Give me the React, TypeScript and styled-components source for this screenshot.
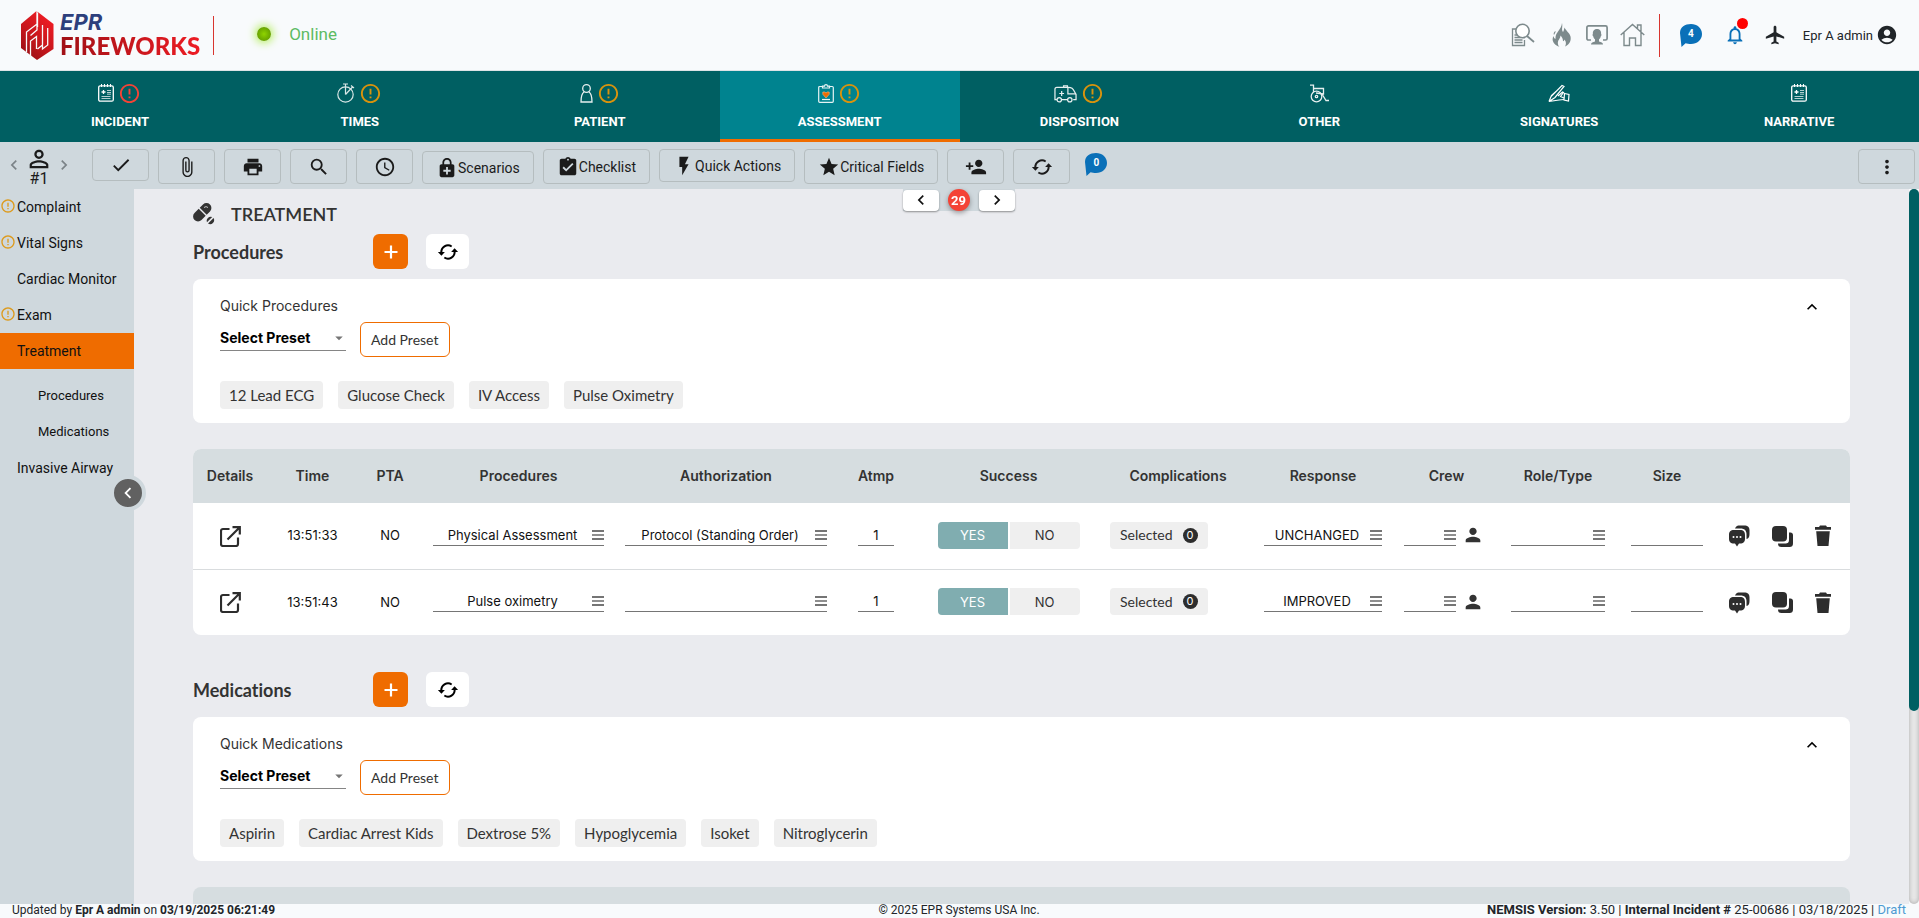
import React from "react";
import styled, { createGlobalStyle, css } from "styled-components";
import {
  MdErrorOutline, MdAttachFile, MdPrint, MdSearch, MdSchedule, MdEnhancedEncryption, MdAssignmentTurnedIn,
  MdFlashOn, MdStar, MdPersonAdd, MdPersonOutline, MdCheck, MdMoreVert, MdNotificationsNone,
  MdLocalAirport, MdAccountCircle, MdPerson, MdKeyboardArrowUp, MdChevronLeft, MdChevronRight,
  MdArrowDropDown,
} from "react-icons/md";

const GlobalStyle = createGlobalStyle`
  *, *::before, *::after { box-sizing: border-box; }
  body { margin: 0; font-family: Roboto, "Liberation Sans", sans-serif; color: #212529; background: #f8fafc; font-variant-ligatures: none; }
  button, input, select { font: inherit; color: inherit; margin: 0; padding: 0; border: 0; background: none; }
  button { cursor: pointer; }
  svg { display: block; flex: none; }
  a { color: inherit; text-decoration: none; }
`;

const inter = `Inter, "Liberation Sans", sans-serif`;
const lato = `Lato, "Liberation Sans", sans-serif`;

/* ---------- shell ---------- */
const Shell = styled.div`
  display: grid;
  grid-template-rows: auto auto auto 1fr auto;
  grid-template-columns: 100%;
  height: 100vh;
`;

/* ---------- header ---------- */
const Header = styled.header`
  display: flex;
  align-items: center;
  height: 71px;
  padding: 0 21px;
  background: #f8fafc;
  border-bottom: 1px solid #dde3e6;
`;
const Brand = styled.a`
  display: flex;
  align-items: center;
  gap: 6px;
`;
const BrandText = styled.span`
  display: flex;
  flex-direction: column;
  margin-right: 7px;
`;
const BrandTop = styled.span`
  font: italic 700 22px/22px ${inter};
  color: #2d3f7c;
`;
const BrandName = styled.span`
  font: 900 24px/26px ${lato};
  color: transparent;
  background: linear-gradient(90deg, #a01016, #ed1c24);
  background-clip: text;
`;
const Rule = styled.span<{ $h: number }>`
  width: 1px;
  height: ${(p) => p.$h}px;
  background: #d8352f;
`;
const Status = styled.div`
  display: flex;
  align-items: center;
  gap: 18px;
  margin-left: 43px;
  padding-bottom: 3px;
  font-size: 17px;
  color: #5dbb63;
`;
const Led = styled.span`
  width: 14px;
  height: 14px;
  border-radius: 50%;
  background: radial-gradient(circle, #8fd400 0%, #72b000 50%, #5c9100 100%);
  box-shadow: 0 0 9px 2px #b5ee5f;
`;
const HeaderTools = styled.div`
  display: flex;
  align-items: center;
  margin-left: auto;
`;
const IconButton = styled.button<{ $gap?: number }>`
  display: flex;
  align-items: center;
  position: relative;
  margin-right: ${(p) => p.$gap ?? 0}px;
`;
const RedDot = styled.span`
  position: absolute;
  top: -6px;
  right: -2px;
  width: 11px;
  height: 11px;
  border-radius: 50%;
  background: #ff0000;
`;
const User = styled.button`
  display: flex;
  align-items: center;
  gap: 3px;
  font-size: 13px;
`;
const BubbleButton = styled.button<{ $top?: number; $left?: number; $right?: number }>`
  display: flex;
  align-items: center;
  justify-content: center;
  position: relative;
  margin: ${(p) => p.$top ?? 0}px ${(p) => p.$right ?? 0}px 0 ${(p) => p.$left ?? 0}px;
`;
const BubbleCount = styled.span`
  position: absolute;
  inset: 0 0 4px;
  display: flex;
  align-items: center;
  justify-content: center;
  font-size: 10px;
  font-weight: 700;
  color: #fff;
`;

/* ---------- tabs ---------- */
const Tabs = styled.nav`
  display: grid;
  grid-template-columns: repeat(8, 1fr);
  background: #005f62;
`;
const Tab = styled.a<{ $active?: boolean }>`
  display: flex;
  flex-direction: column;
  align-items: center;
  gap: 9px;
  height: 71px;
  padding-top: 10px;
  color: #fff;
  font-size: 13px;
  font-weight: 700;
  line-height: 16px;
  ${(p) => p.$active && css`background: #00838f; border-bottom: 3px solid #ef6c00;`}
`;
const TabIcons = styled.span`
  display: flex;
  align-items: center;
  gap: 4px;
  height: 24px;
`;

/* ---------- toolbar ---------- */
const Toolbar = styled.div`
  display: flex;
  align-items: flex-start;
  height: 47px;
  padding: 7px 4px 0 0;
  background: #cfd8dd;
`;
const PatientNav = styled.div`
  display: flex;
  align-items: center;
  justify-content: space-between;
  width: 78px;
  margin: -4px 14px 0 0;
  padding: 0 4px;
  color: #7b8387;
`;
const Patient = styled.button`
  display: flex;
  flex-direction: column;
  align-items: center;
  color: #1b1b1b;
  font-size: 16px;
  line-height: 12px;
`;
const ToolButtons = styled.div`
  display: flex;
  gap: 9px;
`;
const ToolButton = styled.button<{ $h?: number; $end?: boolean }>`
  display: flex;
  align-items: center;
  justify-content: center;
  align-self: ${(p) => (p.$end ? "flex-end" : "flex-start")};
  min-width: 57px;
  height: ${(p) => p.$h ?? 35}px;
  padding: 0 13px;
  border: 1px solid #b5bdbf;
  border-radius: 4px;
  color: #1b1b1b;
  font-size: 14px;
`;

/* ---------- body ---------- */
const Body = styled.div`
  display: grid;
  grid-template-columns: 134px minmax(0, 1fr) 10px;
  min-height: 0;
  position: relative;
`;
const Sidebar = styled.nav`
  display: flex;
  flex-direction: column;
  background: #cfd8dd;
  position: relative;
`;
const SideItem = styled.a<{ $active?: boolean }>`
  display: flex;
  align-items: center;
  height: 36px;
  font-size: 14px;
  color: #111;
  background: ${(p) => (p.$active ? "#ef6c00" : "none")};
`;
const SideAlert = styled.span`
  display: flex;
  width: 17px;
  height: 18px;
  color: #dd9a1c;
`;
const SideGroup = styled.div`
  padding: 8px 0 1px;
`;
const SideSub = styled(SideItem)`
  padding-left: 38px;
  font-size: 13px;
`;
const Collapse = styled.button`
  position: absolute;
  top: 286px;
  right: -12px;
  z-index: 2;
  display: flex;
  align-items: center;
  justify-content: center;
  width: 36px;
  height: 36px;
  border: 4px solid #cfd8dd;
  border-radius: 50%;
  background: #616161;
  color: #fff;
`;
const Content = styled.main`
  overflow-y: auto;
  scrollbar-width: none;
  padding: 10px 59px 0;
  background: #eaebef;
  color: #333;
`;
const Pager = styled.div`
  position: absolute;
  top: 0;
  left: 50%;
  margin-left: -57px;
  z-index: 2;
  display: flex;
  align-items: center;
  justify-content: space-between;
  width: 112px;
  height: 22px;
  background: #cfd8dd;
`;
const PagerButton = styled.button`
  display: flex;
  align-items: center;
  justify-content: center;
  width: 36px;
  height: 21px;
  border-radius: 4px;
  background: #fff;
  color: #111;
  box-shadow: 0 1px 2px rgba(0, 0, 0, 0.4);
`;
const PagerCount = styled.span`
  display: flex;
  align-items: center;
  justify-content: center;
  width: 22px;
  height: 22px;
  border-radius: 50%;
  background: #f44336;
  color: #fff;
  font-size: 13px;
  font-weight: 700;
  box-shadow: 0 2px 5px rgba(0, 0, 0, 0.35);
`;
const PageTitle = styled.h1`
  display: flex;
  align-items: center;
  gap: 16px;
  height: 30px;
  margin: 0 0 5px;
  font-family: ${lato};
  font-size: 18px;
  font-weight: 600;
`;
const Section = styled.section`
  margin-bottom: 37px;
`;
const SectionHead = styled.div`
  display: grid;
  grid-template-columns: 180px auto;
  justify-content: start;
  align-items: center;
  margin-bottom: 10px;
`;
const SectionTitle = styled.h2`
  margin: 0;
  font-family: ${lato};
  font-size: 18px;
  font-weight: 700;
`;
const AddButton = styled.button`
  display: flex;
  align-items: center;
  justify-content: center;
  height: 35px;
  border-radius: 6px;
  background: #ef6c00;
  color: #fff;
`;
const RefreshButton = styled(AddButton)`
  background: #fff;
  color: #000;
`;
const HeadButtons = styled.div`
  display: grid;
  grid-template-columns: 35px 43px;
  gap: 18px;
`;
const QuickCard = styled.div`
  display: flex;
  justify-content: space-between;
  align-items: flex-start;
  height: 144px;
  margin-bottom: 26px;
  padding: 17px 28px 0 27px;
  border-radius: 8px;
  background: #fff;
`;
const QuickBody = styled.div`
  display: flex;
  flex-direction: column;
`;
const QuickLabel = styled.h3`
  margin: 0 0 6px;
  font: 400 14px/20px ${inter};
`;
const PresetRow = styled.div`
  display: flex;
  align-items: flex-start;
  gap: 14px;
  margin-bottom: 24px;
`;
const SelectWrap = styled.span`
  display: flex;
  align-items: center;
  position: relative;
  width: 126px;
  padding-top: 4px;
  border-bottom: 1px solid #858585;
  color: #757575;
`;
const PresetSelect = styled.select`
  appearance: none;
  width: 100%;
  height: 24px;
  font: 700 14px/20px ${inter};
  color: #000;
`;
const Caret = styled.span`
  position: absolute;
  right: -2px;
  pointer-events: none;
`;
const AddPreset = styled.button`
  height: 35px;
  padding: 0 10px;
  border: 1px solid #ef6c00;
  border-radius: 6px;
  background: #fff;
  color: #333;
  font: 400 14px/20px ${lato};
`;
const Chips = styled.div`
  display: flex;
  flex-wrap: wrap;
  gap: 15px;
`;
const Chip = styled.button`
  height: 28px;
  padding: 0 9px;
  border-radius: 4px;
  background: #efefef;
  color: #333;
  font: 400 15px/20px ${lato};
`;
const CardToggle = styled.button`
  padding-top: 1px;
  color: #000;
`;

/* ---------- table ---------- */
const Grid = styled.table`
  width: 100%;
  table-layout: fixed;
  border-collapse: separate;
  border-spacing: 0;
  border-radius: 8px;
  overflow: hidden;
  background: #fff;
  font: 400 13px/20px ${inter};
  text-align: center;
  color: #111;
`;
const HeadCell = styled.th<{ $w: number }>`
  width: ${(p) => p.$w}px;
  height: 54px;
  padding: 0;
  background: #d6dde0;
  color: #333;
  font-size: 14px;
  font-weight: 600;
`;
const Cell = styled.td<{ $pad?: number; $end?: number }>`
  height: 66px;
  padding: 0 ${(p) => p.$end ?? p.$pad ?? 0}px 2px ${(p) => p.$pad ?? 0}px;
  tr + tr > & { border-top: 1px solid #d9dcde; }
`;
const Field = styled.span`
  display: flex;
  align-items: center;
  flex: 1;
  min-width: 0;
  border-bottom: 1px solid #757575;
`;
const FieldInput = styled.input`
  flex: 1;
  width: 100%;
  min-width: 0;
  height: 20px;
  text-align: center;
  outline: 0;
`;
const Line = styled.span<{ $gap?: number; $start?: boolean; $top?: number }>`
  display: flex;
  align-items: center;
  justify-content: ${(p) => (p.$start ? "flex-start" : "center")};
  gap: ${(p) => p.$gap ?? 0}px;
  padding-top: ${(p) => p.$top ?? 0}px;
  color: #333;
`;
const Toggle = styled.span`
  display: grid;
  grid-template-columns: 70px 70px;
  justify-content: center;
  gap: 2px;
`;
const ToggleButton = styled.button<{ $on?: boolean }>`
  height: 27px;
  border-radius: ${(p) => (p.$on ? "4px 0 0 4px" : "0 4px 4px 0")};
  background: ${(p) => (p.$on ? "#80adb0" : "#efefef")};
  color: ${(p) => (p.$on ? "#fff" : "#333")};
`;
const SelectedButton = styled.button`
  display: flex;
  align-items: center;
  gap: 10px;
  height: 27px;
  padding: 0 10px;
  border-radius: 4px;
  background: #efefef;
  color: #333;
  font: 400 14px/20px ${lato};
`;
const SelectedCount = styled.span`
  width: 15px;
  height: 15px;
  border-radius: 50%;
  background: #2d2d2d;
  color: #fff;
  font: 400 11px/15px ${inter};
`;
const NextTableHead = styled.div`
  height: 54px;
  border-radius: 8px 8px 0 0;
  background: #d6dde0;
`;

const Track = styled.div`
  border-radius: 5px;
  background: #e9e9e9;
  box-shadow: inset 0 0 5px #a9a9a9;
`;
const Thumb = styled.div`
  height: 73%;
  border-radius: 5px;
  background: #005f62;
`;

const Footer = styled.footer`
  display: grid;
  grid-template-columns: 1fr auto 1fr;
  height: 14px;
  padding: 0 13px 0 12px;
  background: #f8fafc;
  font-size: 12px;
  line-height: 12px;
  white-space: nowrap;
`;
const FooterEnd = styled.div`
  text-align: right;
  font-size: 13px;
`;
const DraftLink = styled.a`
  color: #4f9bd3;
`;

/* ---------- drawings ---------- */
const Logo = () => (
  <svg width="33" height="49" viewBox="0 0 33 49">
    <defs>
      <linearGradient id="shield" x1="0" y1="1" x2=".6" y2="0">
        <stop offset="0" stopColor="#8d0d12" />
        <stop offset="0.5" stopColor="#c4161c" />
        <stop offset="1" stopColor="#ed1c24" />
      </linearGradient>
    </defs>
    <path fill="url(#shield)" d="M15.500 0L0 13v24l16 12 16.500-11V13z" />
    <path
      fill="none"
      stroke="#f8fafc"
      strokeWidth="1.300"
      d="M16 0v13M5.500 41V21l10.500-8v6l-6.500 5.500M9.500 45V30l6-4.500V38M16.500 2v14M21.500 14v20l-5 4M26.700 17v17l-5.200 4v-5"
    />
  </svg>
);

const SyncIcon = () => (
  <svg width="22" height="22" viewBox="0 0 24 24">
    <path d="M4.800 13A7.300 7.300 0 0116 6M19.200 11A7.300 7.300 0 018 18" fill="none" stroke="currentColor" strokeWidth="2.200" />
    <path d="M1 12h7.600l-3.800 4zM23 12h-7.600l3.800-4z" fill="currentColor" />
  </svg>
);

const PlusIcon = () => (
  <svg width="14" height="14" viewBox="0 0 14 14">
    <path d="M7 .5v13M.5 7h13" stroke="currentColor" strokeWidth="2.200" />
  </svg>
);

const Bubble = () => (
  <svg width="22" height="23" viewBox="0 0 22 23">
    <path fill="#0a70b8" d="M0 9C0 3 5 0 11 0s11 4 11 10-5 10-11 10c-2 0-4-.3-5.400-.8L1.500 23z" />
  </svg>
);

const NotepadIcon = () => (
  <svg width="16" height="18" viewBox="0 0 16 18" fill="none" stroke="#fff">
    <rect x=".7" y="1.800" width="14.600" height="15.400" rx="1.500" strokeWidth="1.300" />
    <path d="M3.500 0v3M6.500 0v3M9.500 0v3M12.500 0v3" />
    <path d="M5.500 6v4M3.500 8h4" strokeWidth="1.300" />
    <path d="M9 6.500h4M9 8.500h4M9 10.200h4M3.500 12.500h9M3.500 14.500h9" opacity=".7" />
  </svg>
);
const StopwatchIcon = () => (
  <svg width="18" height="20" viewBox="0 0 18 20" fill="none" stroke="#d8e6e6" strokeWidth="1.200">
    <circle cx="8.500" cy="11.500" r="7.700" />
    <path d="M8.500 11.500V1M6 1h5M8.500 11.500L16 3.500M14 2.500l3 2.500" />
  </svg>
);
const BodyIcon = () => (
  <svg width="13" height="19" viewBox="0 0 13 19" fill="none" stroke="#e6efef" strokeWidth="1.300">
    <circle cx="6.500" cy="4.500" r="3.800" />
    <path d="M4 8C1.500 9.500 1 12 1 18h11c0-6-.5-8.500-3-10" />
  </svg>
);
const ClipboardIcon = () => (
  <svg width="16" height="19" viewBox="0 0 16 19" fill="none" stroke="#e6f3f4" strokeWidth="1.200">
    <rect x=".7" y="2.500" width="14.600" height="15.800" rx="1" />
    <path d="M4.500 4V2.200h2a1.500 1.500 0 013 0h2V4z" fill="#00838f" />
    <path d="M8 14L4.800 10.300V8h2l1.200 1 1.200-1h2v2.300z" fill="#ef6c00" stroke="#ffb27a" strokeWidth=".6" />
    <path d="M4 15.500h8" />
  </svg>
);
const AmbulanceIcon = () => (
  <svg width="23" height="19" viewBox="0 0 24 19" fill="none" stroke="#e6efef" strokeWidth="1.300">
    <path d="M3 16H1V5a2 2 0 012-2h12c3 0 5 1 6 4l2 3.500V16h-3M8 16h6" />
    <circle cx="5.500" cy="16" r="2.300" /><circle cx="16.500" cy="16" r="2.300" />
    <path d="M14.500 3v7H23M10 3V1.500h4V3M8 7v5M5.500 9.500h5" />
  </svg>
);
const WheelchairIcon = () => (
  <svg width="19" height="19" viewBox="0 0 19 19" fill="none" stroke="#e6efef" strokeWidth="1.300">
    <circle cx="6.500" cy="12.500" r="5.300" /><circle cx="6.500" cy="12.500" r="1.200" />
    <path d="M0 1.200h3.500V8M3.500 4.500h10V10L6 9M12 10l4 6.500h3" />
  </svg>
);
const HandIcon = () => (
  <svg width="22" height="19" viewBox="0 0 22 19" fill="none" stroke="#fff" strokeWidth="1.200">
    <path d="M1 17.500l2-5L14 1.500l2 1-9 11-6 4 10-1.500 5-.5M3 12l5-4.500M10 12l4.500-4 1 .5-3 4 3.500 1.500" />
    <path d="M16.500 9.500l4.500 1-.5 6.500-4.500-1z" />
  </svg>
);
const SearchDocIcon = () => (
  <svg width="24" height="24" viewBox="0 0 24 24" fill="none" stroke="#7d8a8c" strokeWidth="1.300">
    <path d="M5 6H1.500v16.500h12V17" />
    <path d="M3.500 12h4M3.500 14.500h6M3.500 17h8M3.500 19.500h8" strokeWidth="1.600" />
    <circle cx="11.500" cy="8" r="6.700" fill="#fff" strokeWidth="1.600" />
    <path d="M16 13l7 6" strokeWidth="1.800" />
  </svg>
);
const FlameIcon = () => (
  <svg width="19" height="24" viewBox="0 0 19 24" fill="#7d8a8c">
    <path d="M10 0c1 4-1 6 1 9 1-1.500 1-3 1.500-4.500 1 3 5 5 6 9 1 5-2 8.500-5.500 10 1.500-2.500 1-5-.5-7-.3 1-.8 1.500-1.500 1.800 0-2.500-1-4.300-2.500-5.800.3 3-3.500 5-2.500 8.500C6 22 6.500 23 7.500 23.800 2 22-1 17.500 1.500 13c.3 1.500.8 2.500 2 3C3 9 9.500 7 10 0zM3.500 8c.3 1.500-1 2.800-1.500 4-.8-1.500 0-3 1.500-4z" />
  </svg>
);
const MonitorIcon = () => (
  <svg width="22" height="20" viewBox="0 0 22 20" fill="none" stroke="#7d8a8c">
    <path d="M5 15H2.500A1.600 1.600 0 01.9 13.400V2.500A1.600 1.600 0 012.500.9h17a1.600 1.600 0 011.600 1.600v10.900a1.600 1.600 0 01-1.600 1.600H17" strokeWidth="1.700" />
    <path d="M5 19.500c0-2 2-2.300 4-3v-2.300c-1-.7-1.500-1.700-1.800-3-.8-.5-.9-1.700-.3-2.200C6.500 5.500 8.500 4 11 4s4.500 1.500 4.100 5c.6.500.5 1.700-.3 2.200-.3 1.300-.8 2.300-1.800 3v2.300c2 .7 4 1 4 3z" fill="#7d8a8c" stroke="none" />
  </svg>
);
const HouseIcon = () => (
  <svg width="25" height="24" viewBox="0 0 25 24" fill="none" stroke="#7d8a8c" strokeWidth="1.400">
    <path d="M.7 12L12.500 1.500 24.300 12M4 9.500v13h5.500V15h6v7.500H21V9.500M17.500 5.500V2H21v6.500" />
  </svg>
);
const PillIcon = () => (
  <svg width="22" height="22" viewBox="0 0 22 22" fill="#333">
    <path d="M1.500 10L5.700 5.800l7 7L8.500 17A4.950 4.950 0 011.500 10zM6.700 4.800L10 1.500a4.950 4.950 0 017 7l-3.300 3.300z" />
    <path d="M14 19.200l5.200-5.200a4 4 0 00-5.200 5.200zM15 20.500l5.500-5.500A4 4 0 0115 20.500z" />
    <path d="M11 4.500a3 3 0 014 0" stroke="#eaebef" strokeWidth=".8" fill="none" />
  </svg>
);
const OpenIcon = () => (
  <svg width="21" height="21" viewBox="0 0 21 21" fill="none" stroke="#2d2d2d" strokeWidth="2.200">
    <path d="M9.500 3H3a2 2 0 00-2 2v13a2 2 0 002 2h13a2 2 0 002-2v-6.500" />
    <path d="M7.500 13.500L19.500 1.500M12.500 1.200h7.300v7.300" />
  </svg>
);
const ListIcon = () => (
  <svg width="12" height="10" viewBox="0 0 12 10">
    <path fill="#757575" d="M0 0h12v2H0zM0 8h12v2H0z" /><path fill="#8f8f8f" d="M0 4h12v2H0z" />
  </svg>
);
const CommentsIcon = () => (
  <svg width="21" height="22" viewBox="0 0 21 22" fill="#2d2d2d">
    <path d="M6 3.500C7 1 8.500.5 11 .5h4c4 0 5.500 1.500 5.500 5V9c0 3-1 4.500-3 5V9.500c0-4-2-6-6-6z" />
    <path d="M5 5h6c3.500 0 5 1.500 5 5v3.500c0 3.500-1.500 5-5 5h-1L8 21.500 6 18.500H5c-3.500 0-5-1.500-5-5V10c0-3.500 1.500-5 5-5z" />
    <g fill="#fff"><circle cx="4.500" cy="12" r="1" /><circle cx="8" cy="12" r="1" /><circle cx="11.500" cy="12" r="1" /></g>
  </svg>
);
const CopyIcon = () => (
  <svg width="21" height="21" viewBox="0 0 21 21" fill="#2d2d2d">
    <rect width="15" height="15.500" rx="4" />
    <path d="M17 6.500h1.500c1.500 0 2.500 1 2.500 2.500V17c0 3-1 4-4 4H9.500C7 21 6 20 6 17.500h7c3 0 4-1 4-4z" />
  </svg>
);
const TrashIcon = () => (
  <svg width="16" height="22" viewBox="0 0 16 22" fill="#2d2d2d">
    <path d="M0 2h4l1-1.500h6L12 2h4v2.700H0zM1.200 6.200h13.600L13.500 21h-11z" />
  </svg>
);

/* ---------- data ---------- */
const tabs = [
  { name: "INCIDENT", icon: <NotepadIcon />, alert: "#f44336" },
  { name: "TIMES", icon: <StopwatchIcon />, alert: "#d9930d" },
  { name: "PATIENT", icon: <BodyIcon />, alert: "#d9930d" },
  { name: "ASSESSMENT", icon: <ClipboardIcon />, alert: "#d9930d", active: true },
  { name: "DISPOSITION", icon: <AmbulanceIcon />, alert: "#d9930d" },
  { name: "OTHER", icon: <WheelchairIcon /> },
  { name: "SIGNATURES", icon: <HandIcon /> },
  { name: "NARRATIVE", icon: <NotepadIcon /> },
];
const columns: [string, number][] = [
  ["Details", 74], ["Time", 91], ["PTA", 64], ["Procedures", 193], ["Authorization", 222], ["Atmp", 78],
  ["Success", 187], ["Complications", 152], ["Response", 138], ["Crew", 109], ["Role/Type", 114], ["Size", 104],
  ["", 131],
];
const rows = [
  { time: "13:51:33", procedure: "Physical Assessment", auth: "Protocol (Standing Order)", response: "UNCHANGED" },
  { time: "13:51:43", procedure: "Pulse oximetry", auth: "", response: "IMPROVED" },
];

const SideLink = ({ name, alert, active }: { name: string; alert?: boolean; active?: boolean }) => (
  <SideItem href="#" $active={active}>
    <SideAlert>{alert && <MdErrorOutline size={16} />}</SideAlert>
    {name}
  </SideItem>
);

const ListField = ({ label, value = "" }: { label: string; value?: string }) => (
  <Field>
    <FieldInput aria-label={label} defaultValue={value} />
    <button aria-label={`${label} list`}><ListIcon /></button>
  </Field>
);

const SectionHeader = ({ name }: { name: string }) => (
  <SectionHead>
    <SectionTitle>{name}</SectionTitle>
    <HeadButtons>
      <AddButton aria-label={`Add ${name}`}><PlusIcon /></AddButton>
      <RefreshButton aria-label={`Refresh ${name}`}><SyncIcon /></RefreshButton>
    </HeadButtons>
  </SectionHead>
);

const Quick = ({ label, items }: { label: string; items: string[] }) => (
  <QuickCard>
    <QuickBody>
      <QuickLabel>{label}</QuickLabel>
      <PresetRow>
        <SelectWrap>
          <PresetSelect aria-label={`${label} preset`}><option>Select Preset</option></PresetSelect>
          <Caret><MdArrowDropDown size={18} /></Caret>
        </SelectWrap>
        <AddPreset>Add Preset</AddPreset>
      </PresetRow>
      <Chips>{items.map((i) => <Chip key={i}>{i}</Chip>)}</Chips>
    </QuickBody>
    <CardToggle aria-label={`Collapse ${label}`}><MdKeyboardArrowUp size={20} /></CardToggle>
  </QuickCard>
);

export default function App() {
  return (
    <Shell>
      <GlobalStyle />
      <Header>
        <Brand href="#">
          <Logo />
          <BrandText><BrandTop>EPR</BrandTop><BrandName>FIREWORKS</BrandName></BrandText>
          <Rule $h={39} />
        </Brand>
        <Status><Led />Online</Status>
        <HeaderTools>
          <IconButton $gap={17} aria-label="Search records"><SearchDocIcon /></IconButton>
          <IconButton $gap={15} aria-label="Fire"><FlameIcon /></IconButton>
          <IconButton $gap={12} aria-label="Monitor"><MonitorIcon /></IconButton>
          <IconButton $gap={14} aria-label="Home"><HouseIcon /></IconButton>
          <Rule $h={43} />
          <BubbleButton $left={20} $right={22} aria-label="Messages"><Bubble /><BubbleCount>4</BubbleCount></BubbleButton>
          <IconButton $gap={18} aria-label="Notifications">
            <MdNotificationsNone size={22} color="#0a70b8" /><RedDot />
          </IconButton>
          <IconButton $gap={17} aria-label="Flights"><MdLocalAirport size={22} /></IconButton>
          <User>Epr A admin<MdAccountCircle size={22} /></User>
        </HeaderTools>
      </Header>

      <Tabs>
        {tabs.map((t) => (
          <Tab key={t.name} href="#" $active={t.active}>
            <TabIcons>{t.icon}{t.alert && <MdErrorOutline size={23} color={t.alert} />}</TabIcons>
            {t.name}
          </Tab>
        ))}
      </Tabs>

      <Toolbar>
        <PatientNav>
          <button aria-label="Previous patient"><MdChevronLeft size={20} /></button>
          <Patient><MdPersonOutline size={28} />#1</Patient>
          <button aria-label="Next patient"><MdChevronRight size={20} /></button>
        </PatientNav>
        <ToolButtons>
          <ToolButton $h={32} aria-label="Validate"><MdCheck size={22} /></ToolButton>
          <ToolButton aria-label="Attachments"><MdAttachFile size={22} /></ToolButton>
          <ToolButton aria-label="Print"><MdPrint size={22} /></ToolButton>
          <ToolButton aria-label="Search"><MdSearch size={22} /></ToolButton>
          <ToolButton aria-label="History"><MdSchedule size={22} /></ToolButton>
          <ToolButton $h={33} $end><MdEnhancedEncryption size={22} />Scenarios</ToolButton>
          <ToolButton><MdAssignmentTurnedIn size={22} />Checklist</ToolButton>
          <ToolButton $h={33}><MdFlashOn size={22} />Quick Actions</ToolButton>
          <ToolButton><MdStar size={22} />Critical Fields</ToolButton>
          <ToolButton aria-label="Add person"><MdPersonAdd size={22} /></ToolButton>
          <ToolButton aria-label="Sync"><SyncIcon /></ToolButton>
        </ToolButtons>
        <BubbleButton $top={4} $left={15} aria-label="Comments"><Bubble /><BubbleCount>0</BubbleCount></BubbleButton>
        <HeaderTools>
          <ToolButton aria-label="More"><MdMoreVert size={22} /></ToolButton>
        </HeaderTools>
      </Toolbar>

      <Body>
        <Sidebar>
          <SideLink name="Complaint" alert />
          <SideLink name="Vital Signs" alert />
          <SideLink name="Cardiac Monitor" />
          <SideLink name="Exam" alert />
          <SideLink name="Treatment" active />
          <SideGroup>
            <SideSub href="#">Procedures</SideSub>
            <SideSub href="#">Medications</SideSub>
          </SideGroup>
          <SideLink name="Invasive Airway" />
          <Collapse aria-label="Collapse menu"><MdChevronLeft size={22} /></Collapse>
        </Sidebar>

        <Content>
          <PageTitle><PillIcon />TREATMENT</PageTitle>
          <Section>
            <SectionHeader name="Procedures" />
            <Quick label="Quick Procedures" items={["12 Lead ECG", "Glucose Check", "IV Access", "Pulse Oximetry"]} />
            <Grid>
              <thead>
                <tr>{columns.map(([name, w]) => <HeadCell key={name} $w={w}>{name}</HeadCell>)}</tr>
              </thead>
              <tbody>
                {rows.map((r) => (
                  <tr key={r.time}>
                    <Cell><Line $top={2}><button aria-label="Open details"><OpenIcon /></button></Line></Cell>
                    <Cell>{r.time}</Cell>
                    <Cell>NO</Cell>
                    <Cell $pad={11}><ListField label="Procedure" value={r.procedure} /></Cell>
                    <Cell $pad={10}><ListField label="Authorization" value={r.auth} /></Cell>
                    <Cell $pad={21}><Field><FieldInput aria-label="Attempts" defaultValue="1" /></Field></Cell>
                    <Cell>
                      <Toggle>
                        <ToggleButton $on aria-pressed="true">YES</ToggleButton>
                        <ToggleButton aria-pressed="false">NO</ToggleButton>
                      </Toggle>
                    </Cell>
                    <Cell $pad={8}>
                      <Line $start><SelectedButton>Selected<SelectedCount>0</SelectedCount></SelectedButton></Line>
                    </Cell>
                    <Cell $pad={10}><ListField label="Response" value={r.response} /></Cell>
                    <Cell $pad={12} $end={17}>
                      <Line $gap={6}>
                        <ListField label="Crew" />
                        <button aria-label="Assign me"><MdPerson size={22} /></button>
                      </Line>
                    </Cell>
                    <Cell $pad={10}><ListField label="Role" /></Cell>
                    <Cell $pad={16}><Field><FieldInput aria-label="Size" /></Field></Cell>
                    <Cell $pad={0} $end={10}>
                      <Line $gap={22} $top={2}>
                        <button aria-label="Comments"><CommentsIcon /></button>
                        <button aria-label="Duplicate"><CopyIcon /></button>
                        <button aria-label="Delete"><TrashIcon /></button>
                      </Line>
                    </Cell>
                  </tr>
                ))}
              </tbody>
            </Grid>
          </Section>
          <Section>
            <SectionHeader name="Medications" />
            <Quick
              label="Quick Medications"
              items={["Aspirin", "Cardiac Arrest Kids", "Dextrose 5%", "Hypoglycemia", "Isoket", "Nitroglycerin"]}
            />
            <NextTableHead />
          </Section>
        </Content>
        <Track><Thumb /></Track>
        <Pager>
          <PagerButton aria-label="Previous"><MdChevronLeft size={20} /></PagerButton>
          <PagerCount>29</PagerCount>
          <PagerButton aria-label="Next"><MdChevronRight size={20} /></PagerButton>
        </Pager>
      </Body>

      <Footer>
        <div>Updated by <b>Epr A admin</b> on <b>03/19/2025 06:21:49</b></div>
        <div>© 2025 EPR Systems USA Inc.</div>
        <FooterEnd>
          <b>NEMSIS Version:</b> 3.50 | <b>Internal Incident #</b> 25-00686 | 03/18/2025 | <DraftLink href="#">Draft</DraftLink>
        </FooterEnd>
      </Footer>
    </Shell>
  );
}
